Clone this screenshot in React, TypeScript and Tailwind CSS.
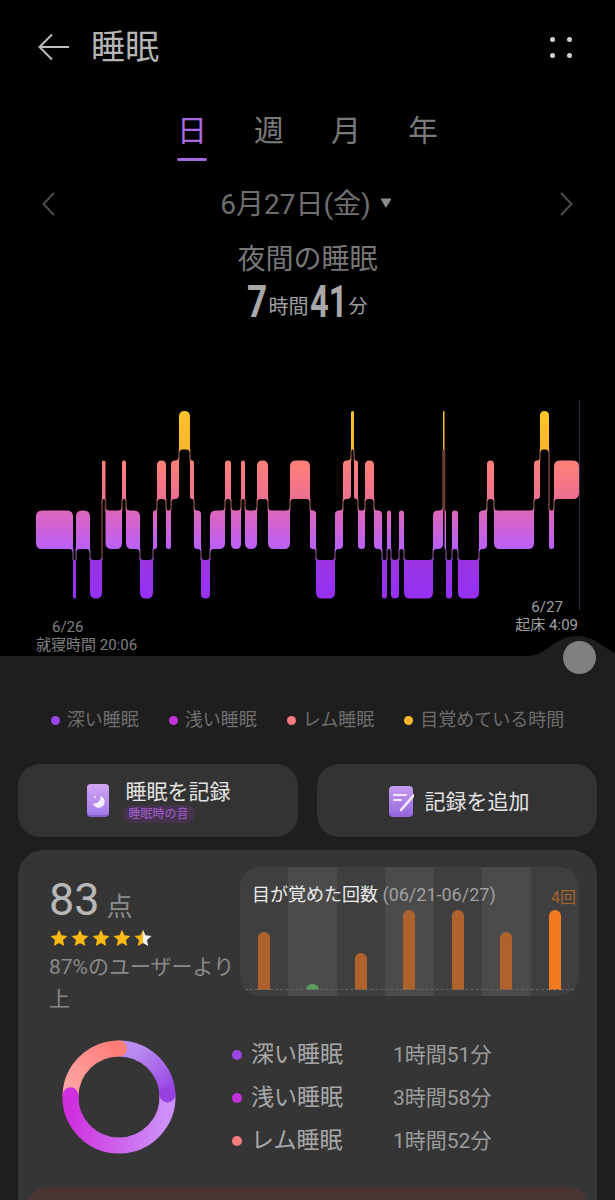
const segments: [number, number, string][] = [
  [36, 73, "light"], [73, 76, "deep"], [76, 90, "light"], [90, 102, "deep"], [102, 105.5, "rem"],
  [105.5, 122, "light"], [122, 126, "rem"], [126, 140, "light"], [140, 153, "deep"], [153, 157, "light"],
  [157, 166, "rem"], [166, 171, "light"], [171, 179, "rem"], [179, 190, "awake"], [190, 194, "rem"],
  [194, 201, "light"], [201, 210, "deep"], [210, 225, "light"], [225, 231, "rem"], [231, 241, "light"],
  [241, 245, "rem"], [245, 257, "light"], [257, 268, "rem"], [268, 290, "light"], [290, 310, "rem"],
  [310, 316, "light"], [316, 335, "deep"], [335, 343, "light"], [343, 351, "rem"], [351, 354, "awake"],
  [354, 358, "rem"], [358, 365, "light"], [365, 374, "rem"], [374, 382, "light"], [382, 387, "deep"],
  [387, 391, "light"], [391, 399, "deep"], [399, 404, "light"], [404, 433, "deep"], [433, 443, "light"],
  [443, 444.5, "awake"], [444.5, 446, "light"], [446, 452, "deep"], [452, 458, "light"], [458, 479, "deep"],
  [479, 487, "light"], [487, 494, "rem"], [494, 534, "light"], [534, 540, "rem"], [540, 549, "awake"],
  [549, 554, "light"], [554, 579, "rem"],
];

// top of each band inside the chart svg (svg starts at y=400)
const levelTop: Record<string, number> = { awake: 11, rem: 60.5, light: 110.5, deep: 160 };
const bandHeight = 38.5;

const legend = [
  { label: "深い睡眠", color: "bg-[#9a45e8]" },
  { label: "浅い睡眠", color: "bg-[#c231dc]" },
  { label: "レム睡眠", color: "bg-[#f47c7c]" },
  { label: "目覚めている時間", color: "bg-[#fbb62c]" },
];

const stages = [
  { label: "深い睡眠", value: "1時間51分", color: "bg-[#9a45e8]" },
  { label: "浅い睡眠", value: "3時間58分", color: "bg-[#c231dc]" },
  { label: "レム睡眠", value: "1時間52分", color: "bg-[#f47c7c]" },
];

const wakeBars = [58, 0, 37, 80, 80, 58, 80];

// band outline: outer corners round, corners facing a neighbouring level flare into the gap
function bandPath(i: number) {
  const [x0, x1, level] = segments[i];
  const y0 = levelTop[level];
  const y1 = y0 + bandHeight;
  const prev = segments[i - 1] ? levelTop[segments[i - 1][2]] : y0;
  const next = segments[i + 1] ? levelTop[segments[i + 1][2]] : y0;
  const r = Math.min(6, (x1 - x0) / 2);
  const f = Math.min(4, (x1 - x0) / 2);

  let d = "";
  // top left
  d += prev < y0 ? `M${x0} ${y0 - f}Q${x0} ${y0} ${x0 + f} ${y0}` : `M${x0} ${y0 + r}Q${x0} ${y0} ${x0 + r} ${y0}`;
  // top right
  d += next < y0 ? `L${x1 - f} ${y0}Q${x1} ${y0} ${x1} ${y0 - f}L${x1} ${y0}` : `L${x1 - r} ${y0}Q${x1} ${y0} ${x1} ${y0 + r}`;
  // bottom right
  d += next > y0 ? `L${x1} ${y1}L${x1} ${y1 + f}Q${x1} ${y1} ${x1 - f} ${y1}` : `L${x1} ${y1 - r}Q${x1} ${y1} ${x1 - r} ${y1}`;
  // bottom left
  d += prev > y0 ? `L${x0 + f} ${y1}Q${x0} ${y1} ${x0} ${y1 + f}L${x0} ${y1}` : `L${x0 + r} ${y1}Q${x0} ${y1} ${x0} ${y1 - r}`;
  return d + "Z";
}

function SleepChart() {
  return (
    <svg width="615" height="210" className="block">
      <defs>
        <linearGradient id="awake" gradientUnits="userSpaceOnUse" x1="0" y1="11" x2="0" y2="50">
          <stop offset="0" stopColor="#fdc42a" />
          <stop offset="1" stopColor="#f6b42c" />
        </linearGradient>
        <linearGradient id="rem" gradientUnits="userSpaceOnUse" x1="0" y1="60" x2="0" y2="99">
          <stop offset="0" stopColor="#ff8176" />
          <stop offset="1" stopColor="#ee6f92" />
        </linearGradient>
        <linearGradient id="light" gradientUnits="userSpaceOnUse" x1="0" y1="110" x2="0" y2="149">
          <stop offset="0" stopColor="#e066b8" />
          <stop offset="1" stopColor="#b95ffa" />
        </linearGradient>
        <linearGradient id="deep" gradientUnits="userSpaceOnUse" x1="0" y1="160" x2="0" y2="199">
          <stop offset="0" stopColor="#9a35e0" />
          <stop offset="1" stopColor="#9630f8" />
        </linearGradient>
      </defs>
      <line x1="579.5" y1="0" x2="579.5" y2="212" stroke="#2c2c50" />
      {segments.map(([from, to, level], i) => {
        const next = segments[i + 1];
        if (!next) return null;
        const a = levelTop[level];
        const b = levelTop[next[2]];
        const top = Math.min(a, b) + bandHeight;
        const bottom = Math.max(a, b);
        return (
          <line key={`c${from}`} x1={to} x2={to} y1={top} y2={bottom} stroke={top < 100 ? "#a0604a" : "#8a5a98"} strokeOpacity="0.7" strokeWidth="1.5" />
        );
      })}
      {segments.map(([from, , level], i) => (
        <path key={from} d={bandPath(i)} fill={`url(#${level})`} />
      ))}
    </svg>
  );
}

function Star({ half }: { half?: boolean }) {
  return (
    <svg width="18" height="18" viewBox="0 0 24 24">
      <defs>
        <linearGradient id="halfStar" x1="0" y1="0" x2="1" y2="0">
          <stop offset="0.5" stopColor="#fdb913" />
          <stop offset="0.5" stopColor="#f2f2f2" />
        </linearGradient>
      </defs>
      <path
        d="M12 1l3.3 7.4 8 .9-6 5.4 1.7 8L12 18.6 5 22.7l1.700-8-6-5.400 8-.9z"
        fill={half ? "url(#halfStar)" : "#fdb913"}
      />
    </svg>
  );
}

function PhoneIcon() {
  return (
    <svg width="22" height="33" viewBox="0 0 22 33">
      <defs>
        <linearGradient id="phoneBody" x1="0" y1="0" x2="0" y2="1">
          <stop offset="0" stopColor="#cfa6f2" />
          <stop offset="1" stopColor="#a27ae8" />
        </linearGradient>
      </defs>
      <rect x="0" y="0" width="22" height="33" rx="4" fill="#8460c8" />
      <rect x="0" y="0" width="22" height="31" rx="4" fill="url(#phoneBody)" />
      <path d="M13.5 12a6 6 0 1 1-7.600 7.400 6.500 6.500 0 0 0 7.600-7.400z" fill="#f4ecfb" />
      <circle cx="8" cy="13" r="1" fill="#f4ecfb" />
    </svg>
  );
}

function NoteIcon() {
  return (
    <svg width="25" height="31" viewBox="0 0 25 31">
      <defs>
        <linearGradient id="noteBody" x1="0" y1="0" x2="0" y2="1">
          <stop offset="0" stopColor="#c79cf0" />
          <stop offset="1" stopColor="#9266dc" />
        </linearGradient>
      </defs>
      <rect x="0" y="0" width="24" height="31" rx="4" fill="url(#noteBody)" />
      <rect x="4" y="8" width="14" height="2" rx="1" fill="#f3e9fb" />
      <rect x="4" y="13" width="9" height="2" rx="1" fill="#f3e9fb" />
      <path d="M24.500 9.500L12 24" stroke="#f3e9fb" strokeWidth="2.600" strokeLinecap="round" />
    </svg>
  );
}

function Donut() {
  const cx = 60;
  const cy = 60;
  const r = 48.5;
  const point = (deg: number) => {
    const a = ((deg - 90) * Math.PI) / 180;
    return [cx + r * Math.cos(a), cy + r * Math.sin(a)];
  };
  const arc = (from: number, to: number) => {
    const [x1, y1] = point(from);
    const [x2, y2] = point(to);
    return `M${x1} ${y1}A${r} ${r} 0 ${to - from > 180 ? 1 : 0} 1 ${x2} ${y2}`;
  };
  const [remX, remY] = point(0);
  const [deepX, deepY] = point(87);
  const [lightX, lightY] = point(272);
  return (
    <svg width="120" height="120">
      <defs>
        <linearGradient id="dDeep" gradientUnits="userSpaceOnUse" x1="75" y1="15" x2="105" y2="60">
          <stop offset="0" stopColor="#ba8cf0" />
          <stop offset="1" stopColor="#9642e2" />
        </linearGradient>
        <linearGradient id="dLight" gradientUnits="userSpaceOnUse" x1="108" y1="70" x2="12" y2="60">
          <stop offset="0" stopColor="#cc90f8" />
          <stop offset="1" stopColor="#cf2fde" />
        </linearGradient>
        <linearGradient id="dRem" gradientUnits="userSpaceOnUse" x1="12" y1="55" x2="60" y2="12">
          <stop offset="0" stopColor="#ffa5a5" />
          <stop offset="1" stopColor="#ff7d78" />
        </linearGradient>
      </defs>
      <g fill="none" strokeWidth="16">
        <path d={arc(0, 87)} stroke="url(#dDeep)" />
        <path d={arc(87, 272)} stroke="url(#dLight)" />
        <path d={arc(272, 360)} stroke="url(#dRem)" />
      </g>
      <circle cx={remX} cy={remY} r="8" fill="#ff7d78" />
      <circle cx={deepX} cy={deepY} r="8" fill="#9642e2" />
      <circle cx={lightX} cy={lightY} r="8" fill="#cf2fde" />
    </svg>
  );
}

export default function App() {
  return (
    <div className="relative h-[1200px] w-[615px] overflow-hidden bg-black font-['Roboto','Noto_Sans_CJK_JP',sans-serif]">
      <section className="h-[656px] pt-[26px]">
        <header className="flex h-[42px] items-center pl-[38px] pr-[43px]">
          <svg width="32" height="28" viewBox="0 0 32 28" fill="none" stroke="#bdbdbd" strokeWidth="2">
            <path d="M31 14H2M14 1.500L1.500 14 14 26.500" />
          </svg>
          <h1 className="ml-[21px] flex-1 text-[34px] leading-[42px] text-[#b5b5b5]">睡眠</h1>
          <div className="grid grid-cols-2 gap-x-[12px] gap-y-[11px]">
            <span className="size-[5px] rounded-full bg-[#cfcfcf]" />
            <span className="size-[5px] rounded-full bg-[#cfcfcf]" />
            <span className="size-[5px] rounded-full bg-[#cfcfcf]" />
            <span className="size-[5px] rounded-full bg-[#cfcfcf]" />
          </div>
        </header>

        <nav className="mt-[44px] flex justify-center">
          {["日", "週", "月", "年"].map((tab, i) => (
            <div key={tab} className="flex w-[77px] flex-col items-center">
              <span className={`mt-[1px] text-[30px] leading-[36px] ${i === 0 ? "text-[#a868e0]" : "text-[#7a7a7a]"}`}>{tab}</span>
              <span className={`mt-[9px] h-[3px] w-[30px] rounded-full ${i === 0 ? "bg-[#a868e0]" : ""}`} />
            </div>
          ))}
        </nav>

        <div className="mt-[25px] flex h-[36px] items-center justify-between px-[42px]">
          <svg width="13" height="24" viewBox="0 0 13 24" fill="none" stroke="#4c4c4c" strokeWidth="2">
            <path d="M12 1L1.500 12 12 23" />
          </svg>
          <div className="flex items-center pr-[3px]">
            <span className="mt-[1px] text-[28px] leading-[36px] text-[#6f6f6f]">6月27日(金)</span>
            <svg width="12" height="10" viewBox="0 0 12 10" className="mb-[3px] ml-[9px]">
              <path d="M1 1.500Q.5 .5 1.500 .5H10.500Q11.500 .5 11 1.500L6.600 9Q6 10 5.400 9z" fill="#8a8a8a" />
            </svg>
          </div>
          <svg width="13" height="24" viewBox="0 0 13 24" fill="none" stroke="#4c4c4c" strokeWidth="2">
            <path d="M1 1L11.500 12 1 23" />
          </svg>
        </div>

        <p className="mt-[22px] h-[32px] text-center text-[28px] leading-[32px] text-[#777777]">夜間の睡眠</p>

        <div className="mt-[8px] flex h-[36px] items-end justify-center text-[#a0a0a0]">
          <span className="w-[21px] origin-left scale-x-[0.8] text-[44px] font-bold leading-[36px] text-[#a8a8a8]">7</span>
          <span className="text-[20px] leading-[26px]">時間</span>
          <span className="ml-[2px] w-[38px] origin-left scale-x-[0.74] text-[44px] font-bold leading-[36px] text-[#a8a8a8]">41</span>
          <span className="text-[19px] leading-[26px]">分</span>
        </div>

        <div className="mt-[80px]">
          <SleepChart />
        </div>

        <div className="-mt-[12px] flex items-start justify-between pl-[36px] pr-[37px] text-[15px] leading-[18px] text-[#808080]">
          <div className="mt-[20px]">
            <div className="pl-[16px]">6/26</div>
            <div>就寝時間 20:06</div>
          </div>
          <div className="text-[#a0a0a0]">
            <div className="pl-[16px]">6/27</div>
            <div>起床 4:09</div>
          </div>
        </div>
      </section>

      <section className="relative h-[544px] bg-[#1e1e1e]">
        <svg width="90" height="22" viewBox="0 0 90 22" className="absolute -top-[20px] right-0">
          <path d="M0 20.500C22 20.500 28 0 53 0C68 0 76 10 90 17V22H0z" fill="#1e1e1e" />
        </svg>
        <span className="absolute -top-[15px] left-[563px] size-[33px] rounded-full bg-[#808080]" />

        <div className="flex h-[77px] items-end justify-center gap-[30px]">
          {legend.map((item) => (
            <div key={item.label} className="flex h-[26px] items-center gap-[7px]">
              <span className={`size-[9px] rounded-full ${item.color}`} />
              <span className="text-[18px] leading-[26px] text-[#6e6e6e]">{item.label}</span>
            </div>
          ))}
        </div>

        <div className="mx-[18px] mt-[31px] grid grid-cols-2 gap-[19px]">
          <div className="flex h-[73px] items-center justify-center gap-[17px] rounded-[22px] bg-[#333333] pl-[1px]">
            <PhoneIcon />
            <div className="-ml-[3px] flex flex-col items-start">
              <span className="ml-[3px] mt-[1px] text-[21px] leading-[26px] text-[#e4e4e4]">睡眠を記録</span>
              <span className="rounded-[9px] bg-[#46344f] px-[6px] text-[12px] leading-[18px] text-[#a45fd0]">睡眠時の音</span>
            </div>
          </div>
          <div className="flex h-[73px] items-center justify-center gap-[11px] rounded-[22px] bg-[#333333] pl-[4px] pt-[2px]">
            <NoteIcon />
            <span className="text-[21px] leading-[26px] text-[#e4e4e4]">記録を追加</span>
          </div>
        </div>

        <div className="mx-[18px] mt-[13px] h-[400px] rounded-t-[26px] bg-[#353535]">
          <div className="flex h-[146px] pl-[31px] pr-[18px] pt-[17px]">
            <div className="w-[191px] pt-[6px]">
              <div className="flex h-[54px] items-end">
                <span className="text-[45px] leading-[54px] text-[#b8b8b8]">83</span>
                <span className="mb-[3px] ml-[7px] text-[26px] leading-[34px] text-[#8c8c8c]">点</span>
              </div>
              <div className="ml-[1px] mt-[1px] flex h-[20px] items-center gap-[3px]">
                <Star />
                <Star />
                <Star />
                <Star />
                <Star half />
              </div>
              <p className="mt-[3px] text-[21px] leading-[32px] text-[#8a8a8a]">87%のユーザーより上</p>
            </div>

            <div className="relative h-[129px] w-[339px] overflow-hidden rounded-[20px] bg-[#3f3f3f]">
              <div className="grid h-full grid-cols-7">
                {wakeBars.map((height, i) => (
                  <div key={i} className={`flex items-end justify-center pb-[6px] ${i % 2 === 1 ? "bg-[#4b4b4b]" : ""}`}>
                    {height > 0 ? (
                      <span
                        className={`w-[12px] rounded-t-full ${i === 6 ? "bg-[#f47a20]" : "bg-[#b0622c]"}`}
                        style={{ height }}
                      />
                    ) : (
                      <span className="h-[6px] w-[13px] rounded-t-full bg-[#5a9e5a]" />
                    )}
                  </div>
                ))}
              </div>
              <div className="absolute bottom-[6px] left-[5px] right-[5px] border-b border-dashed border-[#666666]" />
              <p className="absolute left-[12px] top-[16px] text-[18px] leading-[24px] text-[#ededed]">
                目が覚めた回数 <span className="text-[#a0a0a0]">(06/21-06/27)</span>
              </p>
              <span className="absolute right-[3px] top-[21px] text-[16px] leading-[20px] text-[#a8622e]">4回</span>
            </div>
          </div>

          <div className="mt-[37px] flex h-[128px] items-center pl-[41px]">
            <Donut />
            <div className="ml-[53px] flex flex-col pt-[2px]">
              {stages.map((stage) => (
                <div key={stage.label} className="flex h-[43px] items-center">
                  <span className={`size-[10px] rounded-full ${stage.color}`} />
                  <span className="ml-[9px] w-[142px] text-[23px] leading-[30px] text-[#a8a8a8]">{stage.label}</span>
                  <span className="text-[21px] leading-[30px] text-[#9c9c9c]">{stage.value}</span>
                </div>
              ))}
            </div>
          </div>

          <div className="mx-[9px] mt-[26px] h-[40px] rounded-t-[20px] bg-[#4a3535]" />
        </div>
      </section>
    </div>
  );
}
